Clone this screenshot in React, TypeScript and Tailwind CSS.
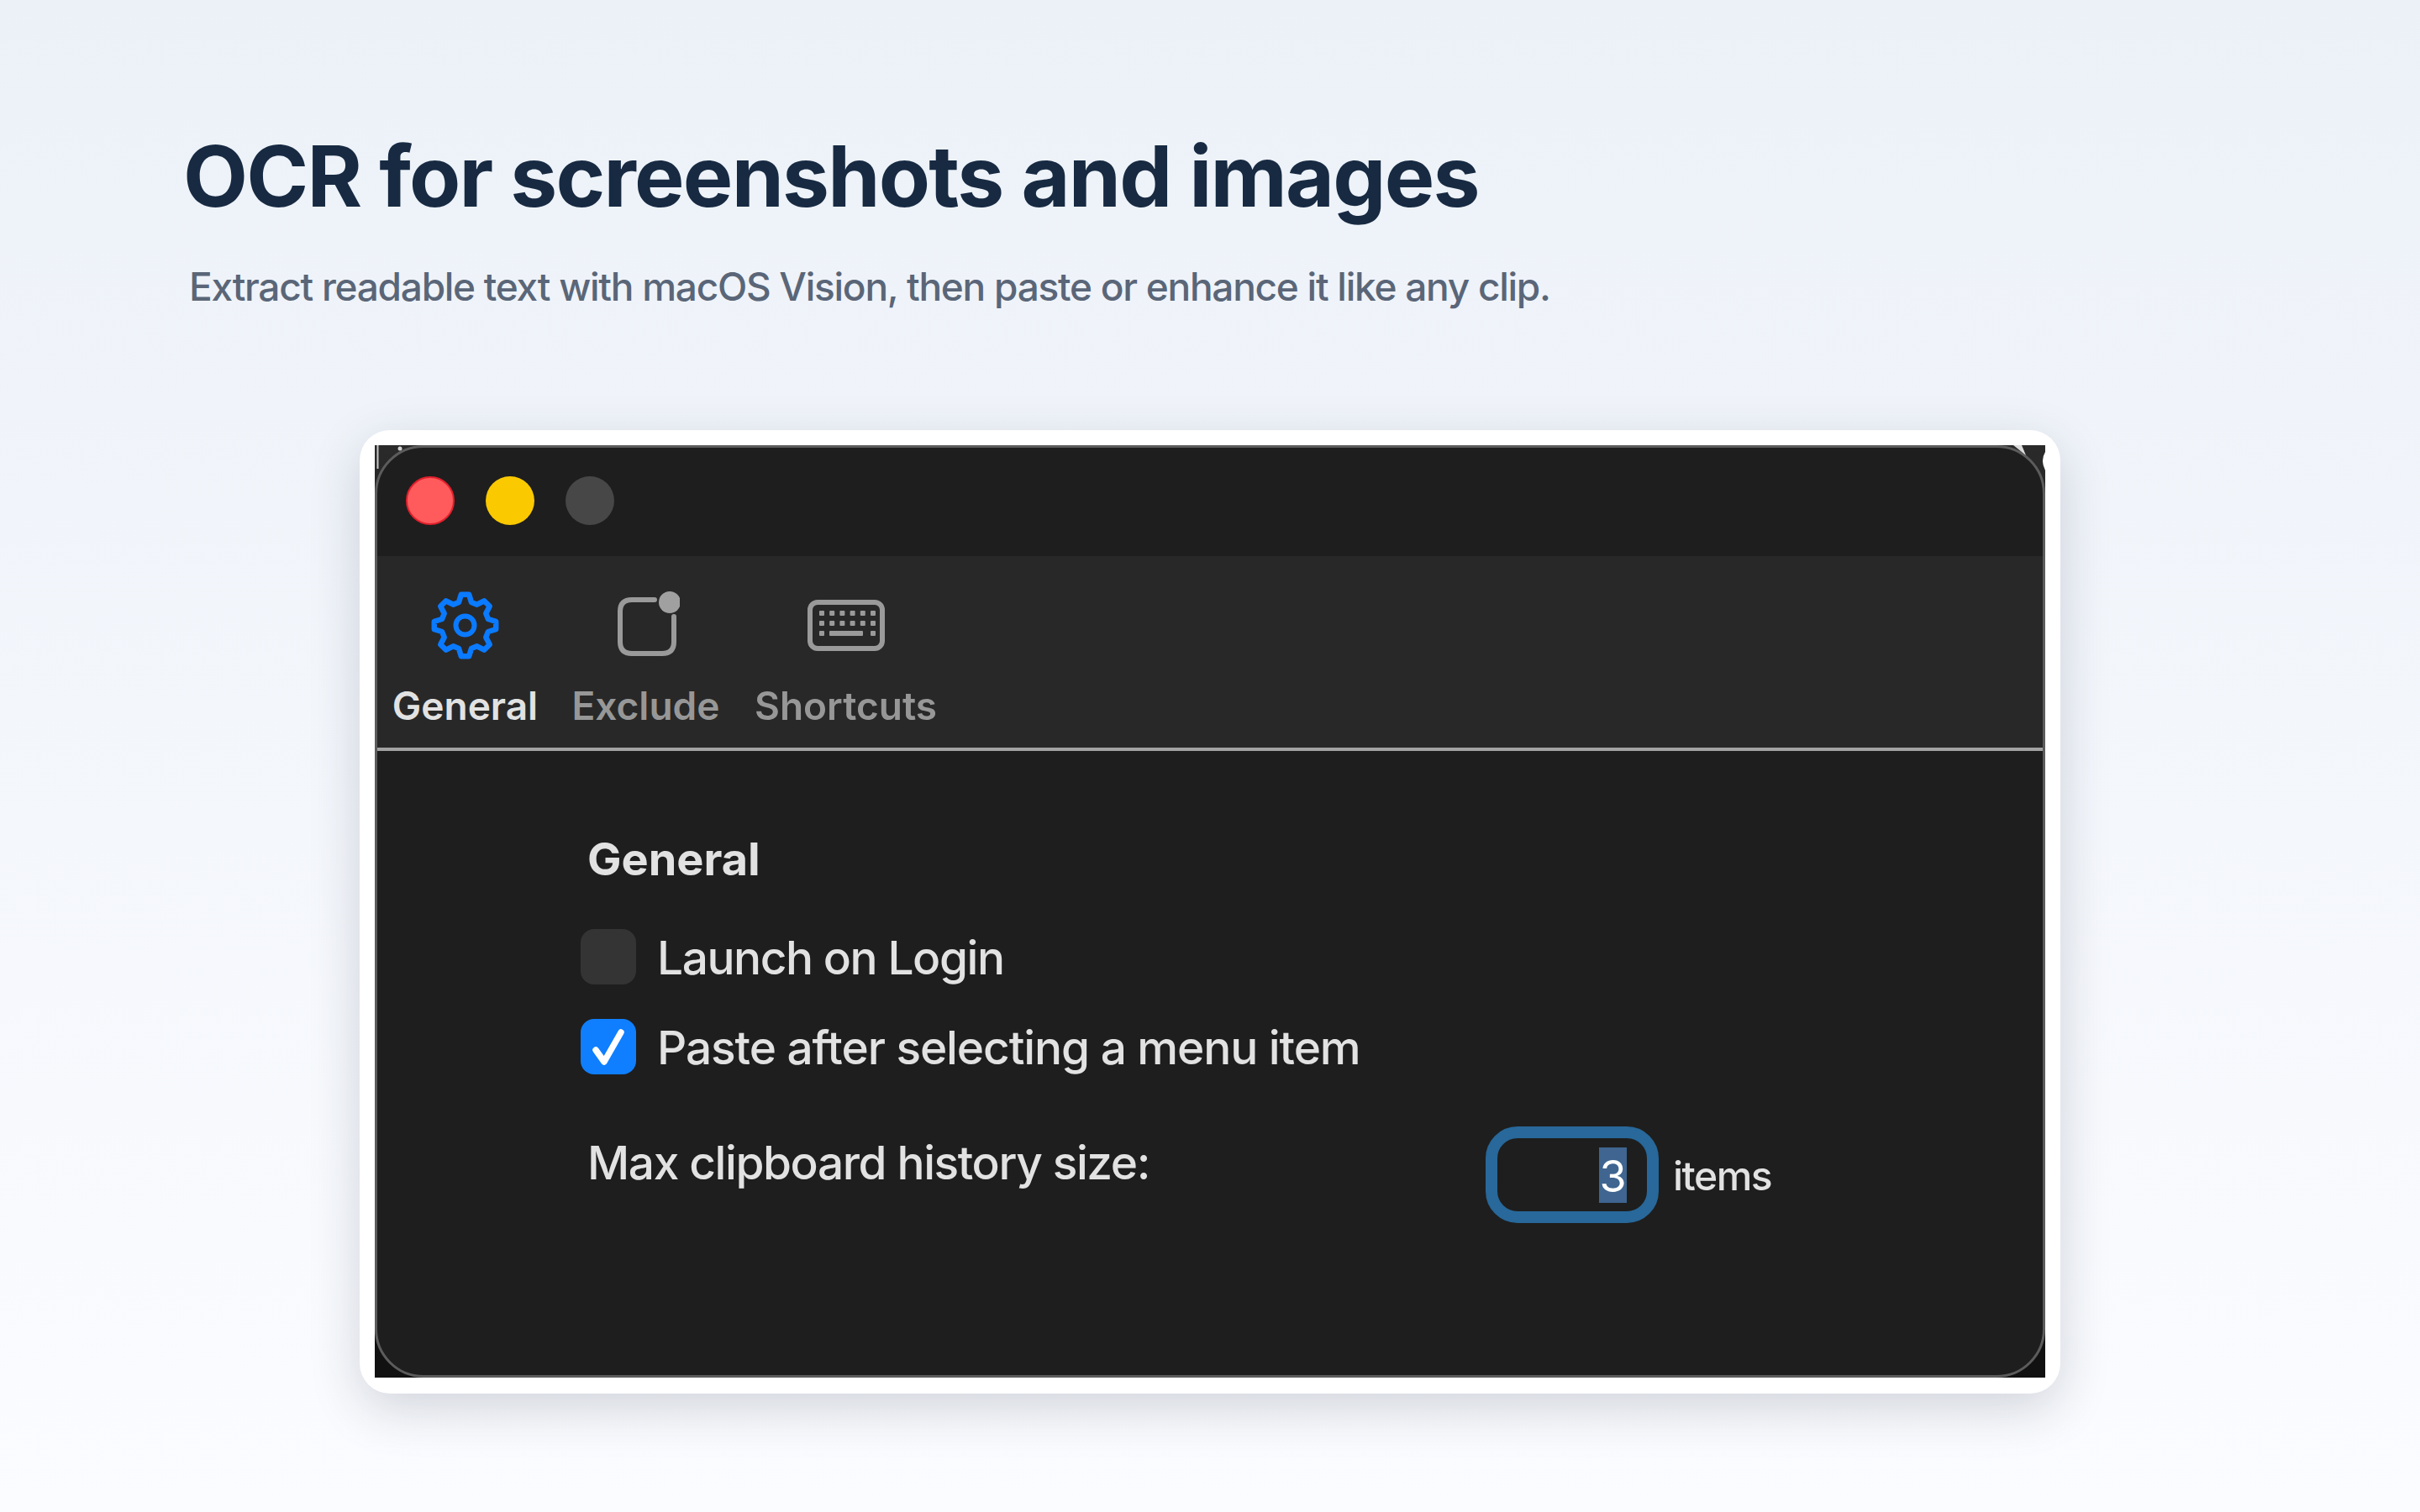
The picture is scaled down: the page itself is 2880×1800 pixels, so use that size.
import React from 'react'

// gear outline, 8 teeth like the SF gearshape glyph
const gearPath = () => {
    const teeth = 8
    const parts: string[] = []
    for (let i = 0; i < teeth; i++) {
        const a = (i / teeth) * Math.PI * 2 - Math.PI / 2
        const step = (Math.PI * 2) / teeth
        const pts: [number, number][] = [
            [28.5, a - step * 0.34],
            [37, a - step * 0.16],
            [37, a + step * 0.16],
            [28.5, a + step * 0.34],
        ]
        pts.forEach(([r, t]) => {
            const x = (40.5 + r * Math.cos(t)).toFixed(2)
            const y = (40.5 + r * Math.sin(t)).toFixed(2)
            parts.push(`${parts.length === 0 ? 'M' : 'L'}${x} ${y}`)
        })
    }
    return parts.join(' ') + ' Z'
}

function GearIcon() {
    return (
        <svg width="81" height="81" viewBox="0 0 81 81" fill="none" stroke="#0a7aff" strokeWidth="6.5" strokeLinejoin="round">
            <path d={gearPath()} />
            <circle cx="40.5" cy="40.5" r="11" strokeWidth="6" />
        </svg>
    )
}

function ExcludeIcon() {
    return (
        <svg width="81" height="81" viewBox="0 0 81 81" fill="none">
            <path d="M51 10 H24 Q10 10 10 24 V60 Q10 74 24 74 H60 Q74 74 74 60 V30" stroke="#9a9a9a" strokeWidth="6" strokeLinecap="round" />
            <circle cx="69" cy="13" r="13" fill="#a0a0a0" />
        </svg>
    )
}

function KeyboardIcon() {
    const dots = [0, 1, 2, 3, 4, 5]
    return (
        <svg width="92" height="81" viewBox="0 0 92 81" fill="none">
            <rect x="3" y="13" width="86" height="55" rx="9" stroke="#9a9a9a" strokeWidth="6" />
            {dots.map(i => (
                <rect key={`a${i}`} x={14 + i * 12.2} y="23" width="6" height="6" rx="1" fill="#9a9a9a" />
            ))}
            {dots.map(i => (
                <rect key={`b${i}`} x={14 + i * 12.2} y="35" width="6" height="6" rx="1" fill="#9a9a9a" />
            ))}
            <rect x="14" y="47" width="6" height="6" rx="1" fill="#9a9a9a" />
            <rect x="26" y="47" width="40" height="6" rx="1" fill="#9a9a9a" />
            <rect x="75" y="47" width="6" height="6" rx="1" fill="#9a9a9a" />
        </svg>
    )
}

const tabs = [
    { label: 'General', Icon: GearIcon, color: 'text-[#e2e2e2]', width: 'w-[169px]' },
    { label: 'Exclude', Icon: ExcludeIcon, color: 'text-[#979797]', width: 'w-[169px]' },
    { label: 'Shortcuts', Icon: KeyboardIcon, color: 'text-[#979797]', width: 'w-[215px]' },
]

export default function App() {
    return (
        <div className="w-[2880px] h-[1800px] overflow-hidden bg-gradient-to-b from-[#ecf1f8] to-[#fbfcff] font-['Inter',sans-serif]">
            {/* Heading */}
            <div className="pt-[160px] pl-[218px]">
                <h1 className="text-[100px] leading-none font-bold tracking-[-0.018em] text-[#172a42]">
                    OCR for screenshots and images
                </h1>
                <p className="mt-[58px] ml-[7px] text-[46px] leading-none font-medium tracking-[-0.0275em] text-[#5a6678]">
                    Extract readable text with macOS Vision, then paste or enhance it like any clip.
                </p>
            </div>

            {/* Screenshot card */}
            <div className="mt-[148px] ml-[428px] w-[2024px] h-[1147px] p-[18px] bg-white rounded-[36px] shadow-[0_18px_60px_rgba(30,41,59,0.18)]">
                <div className="relative w-[1988px] h-[1110px] bg-gradient-to-b from-[#2a2a2a] via-[#111111] to-[#111111]">
                    <div className="w-full h-full flex flex-col overflow-hidden rounded-[58px] border-[3px] border-[#5c5c5c] bg-[#1e1e1e] blur-[0.7px]">
                        {/* Title bar */}
                        <div className="h-[129px] shrink-0 flex items-center gap-[37px] pl-[34px] pb-[3px]">
                            <div className="size-[58px] rounded-full bg-[#ff5a5c] border-2 border-[#e0202c]" />
                            <div className="size-[58px] rounded-full bg-[#fbc900]" />
                            <div className="size-[58px] rounded-full bg-[#474747]" />
                        </div>

                        {/* Toolbar */}
                        <div className="h-[232px] shrink-0 flex items-start gap-[46px] pl-[20px] pt-[42px] bg-[#282828] border-b-[4px] border-[#a2a2a2]">
                            {tabs.map(({ label, Icon, color, width }) => (
                                <div key={label} className={`flex flex-col items-center ${width}`}>
                                    <Icon />
                                    <span className={`mt-[32px] text-[46px] leading-none font-semibold whitespace-nowrap ${color}`}>
                                        {label}
                                    </span>
                                </div>
                            ))}
                        </div>

                        {/* Settings */}
                        <div className="flex-1 pt-[102px] pl-[242px] text-[#e2e2e2]">
                            <h2 className="ml-[8px] text-[54px] leading-none font-bold">General</h2>

                            <div className="mt-[56px] flex items-center gap-[25px]">
                                <div className="size-[66px] rounded-[16px] bg-[#343434]" />
                                <span className="mt-[3px] text-[55px] leading-none font-[450] tracking-[-1.45px]">Launch on Login</span>
                            </div>

                            <div className="mt-[41px] flex items-center gap-[25px]">
                                <div className="size-[66px] rounded-[16px] bg-[#0f7fff] flex items-center justify-center">
                                    <svg width="44" height="48" viewBox="0 0 44 48" fill="none">
                                        <path d="M7 28 L17 42 L37 7" stroke="white" strokeWidth="7.5" strokeLinecap="round" strokeLinejoin="round" />
                                    </svg>
                                </div>
                                <span className="mt-[3px] text-[55px] leading-none font-[450] tracking-[-1.1px]">Paste after selecting a menu item</span>
                            </div>

                            <div className="mt-[62px] flex items-start">
                                <span className="ml-[8px] mt-[16px] w-[1069px] text-[55px] leading-none font-[450] tracking-[-1.4px]">Max clipboard history size:</span>
                                <div className="flex items-center gap-[17px]">
                                    <div className="w-[206px] h-[115px] rounded-[38px] border-[14px] border-[#28689a] flex items-center justify-end pr-[24px]">
                                        <span className="h-[66px] w-[33px] bg-[#3f6590] text-white text-[52px] leading-[70px] text-center">3</span>
                                    </div>
                                    <span className="mt-[3px] text-[48px] leading-none font-[450] tracking-[-1.5px]">items</span>
                                </div>
                            </div>
                        </div>
                    </div>

                    {/* Capture artefacts left in the window corners */}
                    <svg className="absolute top-0 left-0" width="50" height="34" viewBox="0 0 50 34" fill="none">
                        <path d="M3.5 0 V28" stroke="#c8c8c8" strokeWidth="2" />
                        <circle cx="30" cy="4" r="2.5" fill="#d0d0d0" />
                    </svg>
                    <svg className="absolute top-0 right-0" width="50" height="34" viewBox="0 0 50 34" fill="none">
                        <path d="M12 0 H22 L27 12 Z" fill="#dcdcdc" />
                        <path d="M50 8 Q44 18 50 30 Z" fill="#ffffff" />
                    </svg>
                </div>
            </div>
        </div>
    )
}
